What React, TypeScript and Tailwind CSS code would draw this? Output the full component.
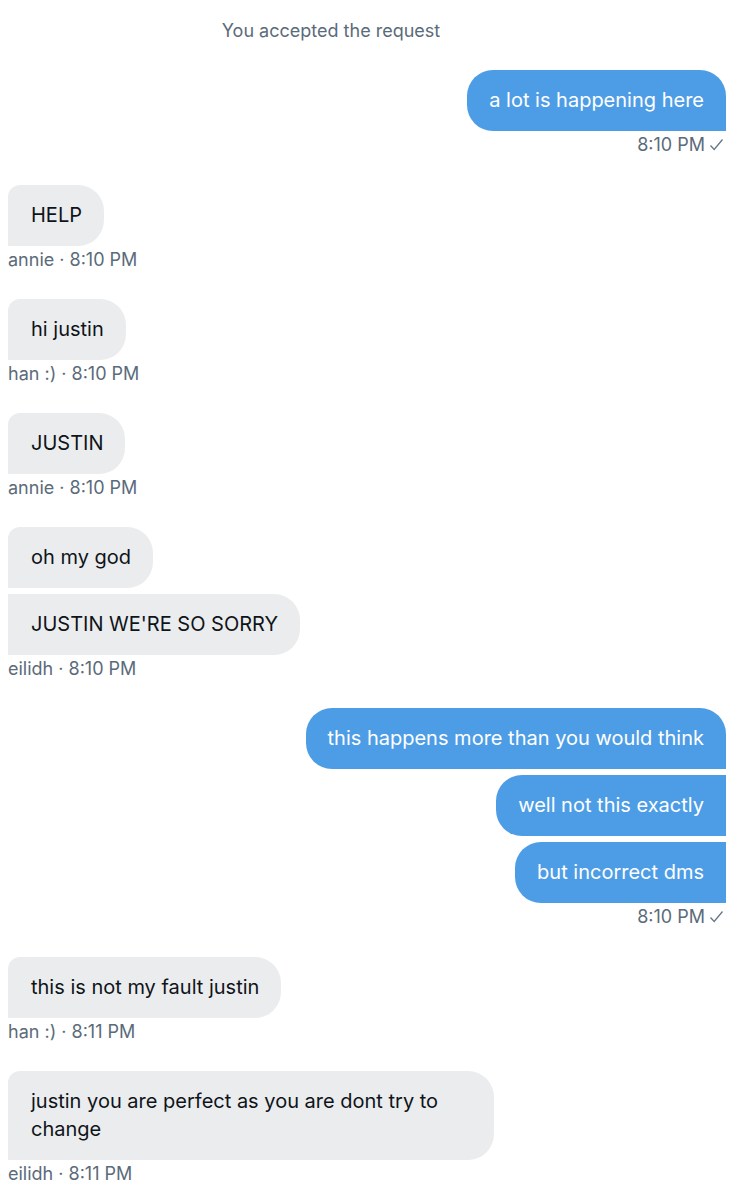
const font = { fontFamily: 'Inter, "Liberation Sans", Arial, sans-serif' };

type Msg = { text: string };

function Check() {
  return (
    <svg width="15" height="14" viewBox="0 0 15 14" className="ml-[4px] inline-block">
      <path d="M1.5 7.5 L5.2 11.5 L13.5 1.5" fill="none" stroke="#657786" strokeWidth="1.3" />
    </svg>
  );
}

function Sent({ msgs, time }: { msgs: Msg[]; time: string }) {
  return (
    <div className="flex flex-col items-end pr-[20px] mb-[30px]">
      <div className="flex flex-col items-end gap-[6px]">
        {msgs.map((m, i) => (
          <div
            key={i}
            className={
              "bg-[#4d9de6] text-white text-[20px] leading-[28px] pl-[22px] pr-[22px] pt-[16px] pb-[17px] rounded-l-[26px] " +
              (i === 0 ? "rounded-tr-[26px]" : "")
            }
          >
            {m.text}
          </div>
        ))}
      </div>
      <div className="mt-[4px] flex items-center text-[18px] leading-[20px] text-[#5b6b7a] pr-[2px]">
        {time}
        <Check />
      </div>
    </div>
  );
}

function Received({ msgs, meta }: { msgs: Msg[]; meta: string }) {
  return (
    <div className="flex flex-col items-start pl-[8px] mb-[29px]">
      <div className="flex flex-col items-start gap-[6px]">
        {msgs.map((m, i) => (
          <div
            key={i}
            className={
              "bg-[#ebecee] text-[#0f1419] text-[20px] leading-[28px] pl-[23px] pr-[22px] pt-[16px] pb-[17px] max-w-[486px] rounded-r-[26px] " +
              (i === 0 ? "rounded-tl-[12px]" : "")
            }
          >
            {m.text}
          </div>
        ))}
      </div>
      <div className="mt-[4px] text-[18px] leading-[20px] text-[#5b6b7a]">{meta}</div>
    </div>
  );
}

export default function App() {
  return (
    <div className="w-[746px] h-[1200px] bg-white overflow-hidden" style={font}>
      <div className="pt-[21px] pb-[29px] pr-[84px] text-center text-[18px] leading-[20px] text-[#5b6b7a]">
        You accepted the request
      </div>
      <Sent msgs={[{ text: "a lot is happening here" }]} time="8:10 PM" />
      <Received msgs={[{ text: "HELP" }]} meta="annie · 8:10 PM" />
      <Received msgs={[{ text: "hi justin" }]} meta="han :) · 8:10 PM" />
      <Received msgs={[{ text: "JUSTIN" }]} meta="annie · 8:10 PM" />
      <Received msgs={[{ text: "oh my god" }, { text: "JUSTIN WE'RE SO SORRY" }]} meta="eilidh · 8:10 PM" />
      <Sent
        msgs={[
          { text: "this happens more than you would think" },
          { text: "well not this exactly" },
          { text: "but incorrect dms" },
        ]}
        time="8:10 PM"
      />
      <Received msgs={[{ text: "this is not my fault justin" }]} meta="han :) · 8:11 PM" />
      <Received
        msgs={[{ text: "justin you are perfect as you are dont try to change" }]}
        meta="eilidh · 8:11 PM"
      />
    </div>
  );
}
